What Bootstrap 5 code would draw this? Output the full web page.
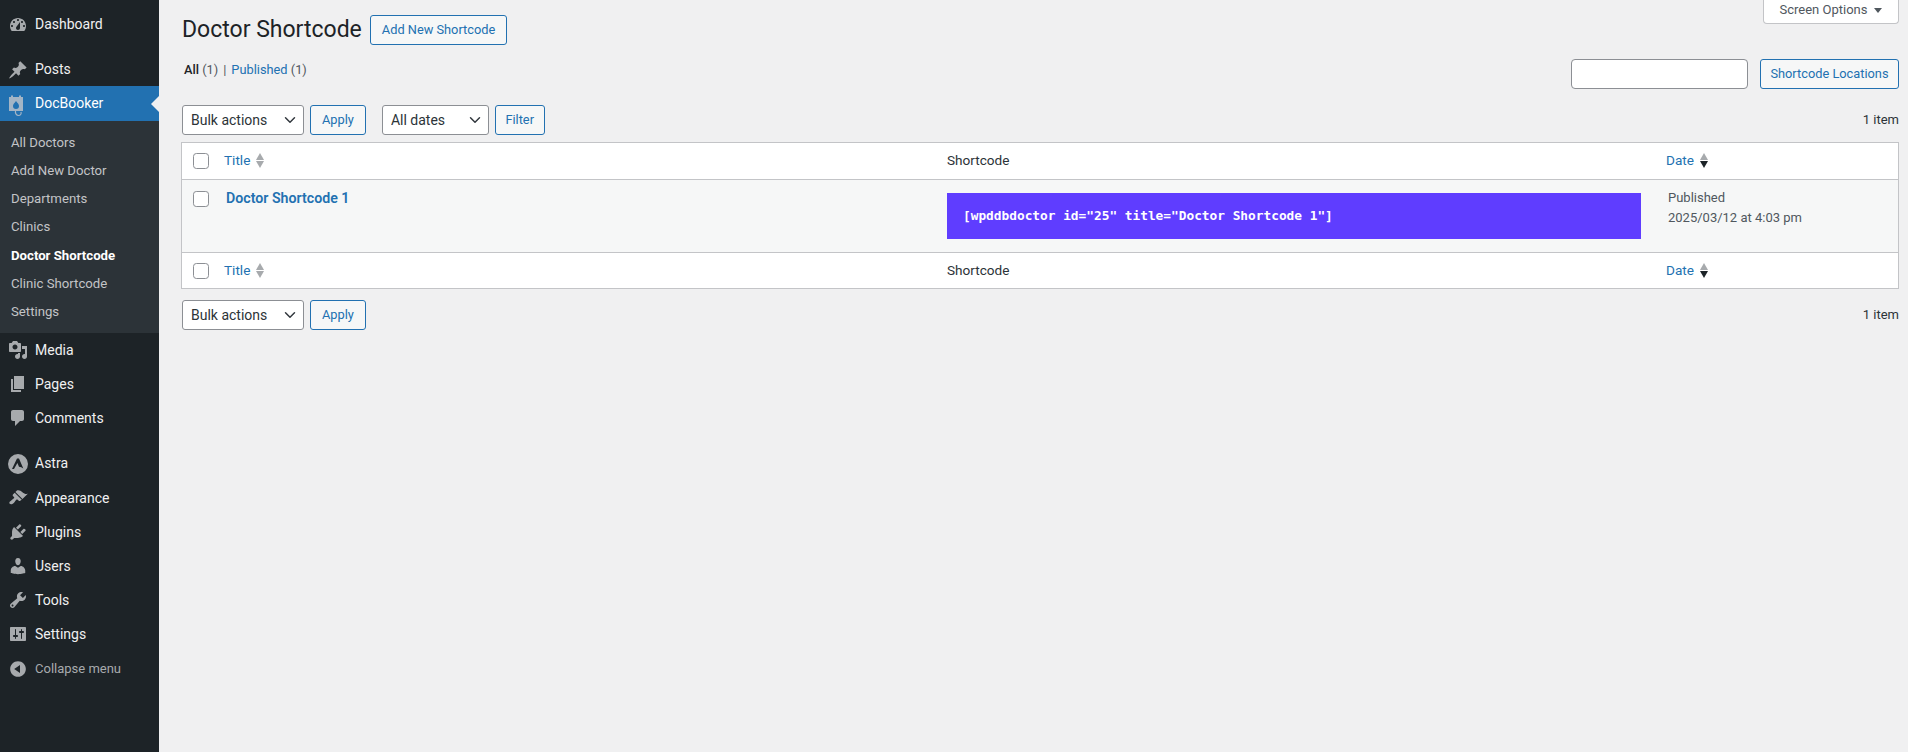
<!DOCTYPE html>
<html lang="en"><head><meta charset="utf-8"><title>Doctor Shortcode</title>
<link href="https://cdn.jsdelivr.net/npm/bootstrap@5.3.0/dist/css/bootstrap.min.css" rel="stylesheet">
<style>
html,body{height:100%;overflow:hidden}
body{background:#f0f0f1;font:13px/1.4 Roboto,"Open Sans",sans-serif;color:#2c3338}
a{color:#2271b1;text-decoration:none}
.wp-side{width:159px;flex:none;height:752px;background:#1d2327;padding-top:8px;font-size:14px}
.wp-item{height:34px;display:flex;align-items:center;color:#f0f0f1;position:relative}
.wp-item svg{width:20px;height:20px;margin:0 7px 0 8px;fill:#a7aaad;flex:none;overflow:visible}
.wp-gap{margin-top:11px}
.wp-short{height:33px}
.wp-active{background:#2271b1;color:#fff;height:35px}
.wp-active:after{content:"";position:absolute;right:0;top:50%;margin-top:-8px;border:8px solid transparent;border-right-color:#f0f0f1;border-left:0}
.wp-active svg{fill:#a3b5c6}
.wp-steth{fill:none!important;stroke:#a3b5c6;stroke-width:1.200}
.wp-astra{height:35px;margin-top:11px}
.wp-collapse{color:#a7aaad;font-size:13px;margin-top:1px}
.wp-sub{background:#2c3338;padding:8px 0 7px;font-size:13.2px}
.wp-sub a{display:flex;align-items:center;height:28.2px;padding-left:11px;color:#c3c4c7}
.wp-sub a.wp-cur{color:#fff;font-weight:700}
.wp-main{flex:1;padding:0 9px 0 22px;min-width:0}
.wp-tab{height:25px;width:136px;margin-top:-1px;padding-bottom:2px;background:#fff;border:1px solid #c3c4c7;border-top:0;border-radius:0 0 4px 4px;color:#50575e;gap:7px}
.wp-title{font-size:23px;font-weight:400;line-height:30px;color:#1d2327;margin:0 8px 0 1px}
.wp-head{padding-top:15px;height:45px}
.wp-btn{font-size:12.8px;line-height:1;height:30px;padding:0 11px;color:#2271b1;background:#f6f7f7;border:1px solid #2271b1;border-radius:3px;--bs-btn-hover-color:#135e96;--bs-btn-hover-bg:#f0f0f1;--bs-btn-hover-border-color:#135e96}
.wp-tight{padding:0 9.500px}
.wp-views{height:30px;margin-top:14px;padding-left:3px}
.wp-viewl{margin-top:2px;font-size:12.8px}
.wp-views b{font-weight:500;color:#1d2327}
.wp-count{color:#50575e}
.wp-sep{color:#50575e;margin:0 5px}
.wp-search{width:177px;height:30px;border:1px solid #8c8f94;border-radius:4px;padding:0 8px;margin-right:12px;min-height:0}
.wp-nav{height:30px;margin-top:16px;padding-left:1px}
.wp-navb{margin-top:11px}
.wp-sel{height:30px;min-height:0;font-size:14px;line-height:1;border:1px solid #8c8f94;border-radius:3px;padding:0 24px 0 8px;color:#2c3338;background-position:right 6px center;background-size:14px 12px;background-color:#fff}
.wp-w1{width:122px}.wp-w2{width:107px}
.wp-mr6{margin-right:6px}.wp-mr17{margin-right:16px}
.wp-table{width:1718px;table-layout:fixed;margin:7px 0 0;background:#fff;border:1px solid #c3c4c7;font-size:13.6px;border-collapse:separate;border-spacing:0}
.wp-table th,.wp-table td{border:0;padding:0 10px;vertical-align:middle;font-weight:400;color:#2c3338;background:transparent;box-shadow:none}
.wp-table thead th{height:37px;border-bottom:1px solid #c3c4c7}
.wp-table tfoot th{height:36px;border-top:1px solid #c3c4c7;padding-top:1px}
.wp-table tbody td{height:72px;background:#f6f7f7;vertical-align:top;color:#50575e;font-size:13px}
.wp-table th a{color:#2271b1}
.wp-table .wp-ccb{width:33px;padding:0 0 0 11px}
.wp-table .wp-cdate{width:242px}
.wp-table .wp-cshort{width:719px}
.wp-table .wp-ctitle{padding-left:9px}
.wp-table tbody .wp-ccb{padding:11px 0 0 11px}
.wp-table tbody .wp-rowt{padding:7px 0 0 11px;line-height:22px}
.wp-table tbody .wp-rowt a{font-size:14.2px;font-weight:600}
.wp-table tbody .wp-rowd{padding:8px 0 0 12px;line-height:19.5px}
.wp-table tbody .wp-rows{padding-top:13px}
.wp-cb{width:16px;height:16px;margin:0;border:1px solid #8c8f94;border-radius:4px;display:block}
.wp-code{background:#5f3dff;color:#fff;height:46px;width:694px;display:flex;align-items:center;padding:0 0 2px 16px;font:700 12.8px "DejaVu Sans Mono",monospace}
.wp-sort{width:8px;height:15px;margin-left:6px;vertical-align:-3px}
.wp-up{fill:#a7aaad}.wp-down{fill:#a7aaad}.wp-dark{fill:#1d2327}
.wp-arrow{width:8px;height:5px;fill:#50575e}
</style></head><body>
<div class="d-flex">
<aside class="wp-side">
<div class="wp-item"><svg viewBox="0 0 20 20"><path fill-rule="evenodd" d="M3.76 16h12.48c1.1-1.37 1.76-3.11 1.76-5 0-4.42-3.58-8-8-8s-8 3.58-8 8c0 1.89.66 3.63 1.76 5zM10 4c.55 0 1 .45 1 1s-.45 1-1 1-1-.45-1-1 .45-1 1-1zM6 6c.55 0 1 .45 1 1s-.45 1-1 1-1-.45-1-1 .45-1 1-1zm8 0c.55 0 1 .45 1 1s-.45 1-1 1-1-.45-1-1 .45-1 1-1zm-5.37 5.55L12 7v6c0 1.1-.9 2-2 2s-2-.9-2-2c0-.57.24-1.08.63-1.45zM4 10c.55 0 1 .45 1 1s-.45 1-1 1-1-.45-1-1 .45-1 1-1zm12 0c.55 0 1 .45 1 1s-.45 1-1 1-1-.45-1-1 .45-1 1-1z"/></svg>Dashboard</div>
<div class="wp-item wp-gap wp-short"><svg viewBox="0 0 20 20"><path d="M10.44 3.02l1.82-1.82 6.36 6.35-1.83 1.82c-1.05-.68-2.48-.57-3.41.36l-.75.75c-.92.93-1.04 2.35-.35 3.41l-1.83 1.82-2.41-2.41-2.8 2.79c-.42.42-3.38 2.71-3.8 2.29s1.86-3.39 2.28-3.81l2.79-2.79L4.1 9.36l1.83-1.82c1.05.69 2.48.57 3.4-.36l.75-.75c.93-.92 1.05-2.35.36-3.41z"/></svg>Posts</div>
<div class="wp-item wp-active"><svg viewBox="0 0 20 20"><path fill-rule="evenodd" d="M1 3h2V1.500h2V3h6V1.500h2V3h2v14H1zM8 7c1.500 2 3 3.300 3 5a3 3 0 0 1-6 0c0-1.700 1.500-3 3-5z"/><path class="wp-steth" d="M7.500 16.500c-.5 3 1 5 3 5s3-1.500 2.500-3.500"/></svg>DocBooker</div>
<div class="wp-sub">
<a href="#">All Doctors</a><a href="#">Add New Doctor</a><a href="#">Departments</a><a href="#">Clinics</a><a href="#" class="wp-cur">Doctor Shortcode</a><a href="#">Clinic Shortcode</a><a href="#">Settings</a>
</div>
<div class="wp-item"><svg viewBox="0 0 20 20"><path fill-rule="evenodd" d="M13 11V4c0-.55-.45-1-1-1h-1.670L9 1H5L3.670 3H2c-.55 0-1 .45-1 1v7c0 .55.45 1 1 1h10c.55 0 1-.45 1-1zM7 4.500c1.380 0 2.500 1.120 2.500 2.500S8.380 9.500 7 9.500 4.500 8.380 4.500 7 5.620 4.500 7 4.500zM14 6h5v10.500c0 1.380-1.120 2.500-2.500 2.500S14 17.880 14 16.500s1.120-2.500 2.500-2.500c.17 0 .34.02.5.05V9h-3V6zm-4 8.050V13h2v3.500c0 1.380-1.120 2.500-2.500 2.500S7 17.880 7 16.500 8.120 14 9.500 14c.17 0 .34.02.5.05z"/></svg>Media</div>
<div class="wp-item"><svg viewBox="0 0 20 20"><path d="M6 15V2h10v13H6zm-1 1h8v2H3V5h2v11z"/></svg>Pages</div>
<div class="wp-item"><svg viewBox="0 0 20 20"><path d="M5 2h9c1.100 0 2 .9 2 2v7c0 1.100-.9 2-2 2h-2l-5 5v-5H5c-1.100 0-2-.9-2-2V4c0-1.100.9-2 2-2z"/></svg>Comments</div>
<div class="wp-item wp-astra"><svg viewBox="0 0 20 20"><path fill-rule="evenodd" d="M10 0a10 10 0 1 0 0 20 10 10 0 0 0 0-20zM9 4.500h2l4.300 10c-1.300-.9-2.800-1.500-4.300-1.700L9.400 9l-3.400 6H4z"/></svg>Astra</div>
<div class="wp-item"><svg viewBox="0 0 20 20"><path d="M14.480 11.060L7.410 3.990l1.500-1.500c.5-.56 2.300-.47 3.510.32 1.210.8 1.430 1.280 2.910 2.100 1.180.64 2.450 1.260 4.450.85zm-.71.71L6.700 4.700 4.930 6.470c-.39.39-.39 1.020 0 1.410l1.060 1.060c.39.39.39 1.030 0 1.420-.6.6-1.430 1.110-2.210 1.690-.35.26-.7.53-1.010.84C1.430 13.230.87 14.930 1.800 15.860s2.630.37 3.970-.97c.31-.31.58-.66.84-1.010.58-.78 1.090-1.610 1.690-2.210.39-.39 1.030-.39 1.420 0l1.060 1.060c.39.39 1.020.39 1.410 0z"/></svg>Appearance</div>
<div class="wp-item"><svg viewBox="0 0 20 20"><path d="M13.110 4.360L9.870 7.600 8 5.730l3.240-3.240c.35-.34 1.050-.2 1.560.32.52.51.66 1.210.31 1.550zm-8 1.770l.91-1.120 9.010 9.010-1.190.84c-.71.71-2.630 1.160-3.820 1.160H6.140L4.900 17.260c-.59.59-1.540.59-2.120 0-.59-.58-.59-1.530 0-2.120l1.240-1.240v-3.880c0-1.130.4-3.190 1.090-3.890zm7.260 3.970l3.240-3.240c.34-.35 1.040-.21 1.550.31.52.51.66 1.210.31 1.550l-3.240 3.250z"/></svg>Plugins</div>
<div class="wp-item"><svg viewBox="0 0 20 20"><path d="M10 9.250c-2.270 0-2.730-3.440-2.730-3.440C7 4.020 7.820 2 9.970 2c2.160 0 2.980 2.020 2.710 3.810 0 0-.41 3.440-2.680 3.440zm0 2.570L12.720 10c2.390 0 4.520 2.330 4.520 4.530v2.490s-3.650 1.130-7.240 1.130c-3.650 0-7.240-1.130-7.240-1.130v-2.490c0-2.250 1.940-4.480 4.470-4.480z"/></svg>Users</div>
<div class="wp-item"><svg viewBox="0 0 20 20"><path fill-rule="evenodd" d="M16.680 9.770c-1.340 1.340-3.300 1.670-4.950.99l-5.410 6.520c-.99.99-2.590.99-3.580 0s-.99-2.590 0-3.570l6.520-5.420c-.68-1.650-.35-3.610.99-4.950 1.280-1.280 3.120-1.620 4.720-1.060l-2.890 2.890 2.820 2.820 2.860-2.870c.53 1.580.18 3.390-1.080 4.650zM3.810 16.210c.4.39 1.040.39 1.430 0 .4-.4.4-1.040 0-1.430-.39-.4-1.030-.4-1.430 0-.39.39-.39 1.030 0 1.430z"/></svg>Tools</div>
<div class="wp-item"><svg viewBox="0 0 20 20"><path fill-rule="evenodd" d="M18 16V4c0-.55-.45-1-1-1H3c-.55 0-1 .45-1 1v12c0 .55.45 1 1 1h14c.55 0 1-.45 1-1zM8 11h1c.55 0 1 .45 1 1s-.45 1-1 1H8v1.500c0 .28-.22.5-.5.5s-.5-.22-.5-.5V13H6c-.55 0-1-.45-1-1s.45-1 1-1h1V5.500c0-.28.22-.5.5-.5s.5.22.5.5V11zm5-2h-1c-.55 0-1-.45-1-1s.45-1 1-1h1V5.500c0-.28.22-.5.5-.5s.5.22.5.5V7h1c.55 0 1 .45 1 1s-.45 1-1 1h-1v5.500c0 .28-.22.5-.5.5s-.5-.22-.5-.5V9z"/></svg>Settings</div>
<div class="wp-item wp-collapse"><svg viewBox="0 0 20 20"><path fill-rule="evenodd" d="M10 2.160c4.330 0 7.840 3.510 7.840 7.840s-3.510 7.840-7.840 7.840S2.160 14.330 2.160 10 5.710 2.160 10 2.160zm2 11.720V6.120L6.180 9.970z"/></svg>Collapse menu</div>
</aside>
<main class="wp-main">
<div class="wp-tab float-end d-flex align-items-center justify-content-center">Screen Options <svg class="wp-arrow" viewBox="0 0 8 5"><path d="M0 0h8L4 5z"/></svg></div>
<div class="wp-head d-flex align-items-center">
<h1 class="wp-title">Doctor Shortcode</h1><a class="btn wp-btn d-flex align-items-center" href="#">Add New Shortcode</a>
</div>
<div class="wp-views d-flex align-items-start">
<div class="wp-viewl d-flex"><span><b>All</b> <span class="wp-count">(1)</span></span><span class="wp-sep">|</span><span><a href="#">Published</a> <span class="wp-count">(1)</span></span></div>
<div class="ms-auto d-flex"><input class="form-control wp-search" type="search" aria-label="Search"><a class="btn wp-btn wp-tight d-flex align-items-center" href="#">Shortcode Locations</a></div>
</div>
<div class="wp-nav d-flex align-items-center">
<select class="form-select wp-sel wp-w1 wp-mr6" aria-label="Bulk actions"><option>Bulk actions</option></select><button class="btn wp-btn wp-mr17">Apply</button>
<select class="form-select wp-sel wp-w2 wp-mr6" aria-label="Dates"><option>All dates</option></select><button class="btn wp-btn wp-tight">Filter</button>
<span class="ms-auto">1 item</span>
</div>
<table class="table wp-table">
<thead><tr>
<th class="wp-ccb"><input class="form-check-input wp-cb" type="checkbox" aria-label="Select all"></th>
<th class="wp-ctitle"><a href="#">Title</a><svg class="wp-sort" viewBox="0 0 8 15"><path class="wp-up" d="M4 0l4 7H0z"/><path class="wp-down" d="M0 8h8l-4 7z"/></svg></th>
<th class="wp-cshort">Shortcode</th>
<th class="wp-cdate"><a href="#">Date</a><svg class="wp-sort" viewBox="0 0 8 15"><path class="wp-up" d="M4 0l4 7H0z"/><path class="wp-dark" d="M0 8h8l-4 7z"/></svg></th>
</tr></thead>
<tbody><tr>
<td class="wp-ccb"><input class="form-check-input wp-cb" type="checkbox" aria-label="Select row"></td>
<td class="wp-rowt"><a href="#">Doctor Shortcode 1</a></td>
<td class="wp-rows"><div class="wp-code">[wpddbdoctor id="25" title="Doctor Shortcode 1"]</div></td>
<td class="wp-rowd">Published<br>2025/03/12 at 4:03 pm</td>
</tr></tbody>
<tfoot><tr>
<th class="wp-ccb"><input class="form-check-input wp-cb" type="checkbox" aria-label="Select all"></th>
<th class="wp-ctitle"><a href="#">Title</a><svg class="wp-sort" viewBox="0 0 8 15"><path class="wp-up" d="M4 0l4 7H0z"/><path class="wp-down" d="M0 8h8l-4 7z"/></svg></th>
<th>Shortcode</th>
<th><a href="#">Date</a><svg class="wp-sort" viewBox="0 0 8 15"><path class="wp-up" d="M4 0l4 7H0z"/><path class="wp-dark" d="M0 8h8l-4 7z"/></svg></th>
</tr></tfoot>
</table>
<div class="wp-nav wp-navb d-flex align-items-center">
<select class="form-select wp-sel wp-w1 wp-mr6" aria-label="Bulk actions"><option>Bulk actions</option></select><button class="btn wp-btn">Apply</button>
<span class="ms-auto">1 item</span>
</div>
</main>
</div>
<script src="https://cdn.jsdelivr.net/npm/bootstrap@5.3.0/dist/js/bootstrap.bundle.min.js"></script>
</body></html>
